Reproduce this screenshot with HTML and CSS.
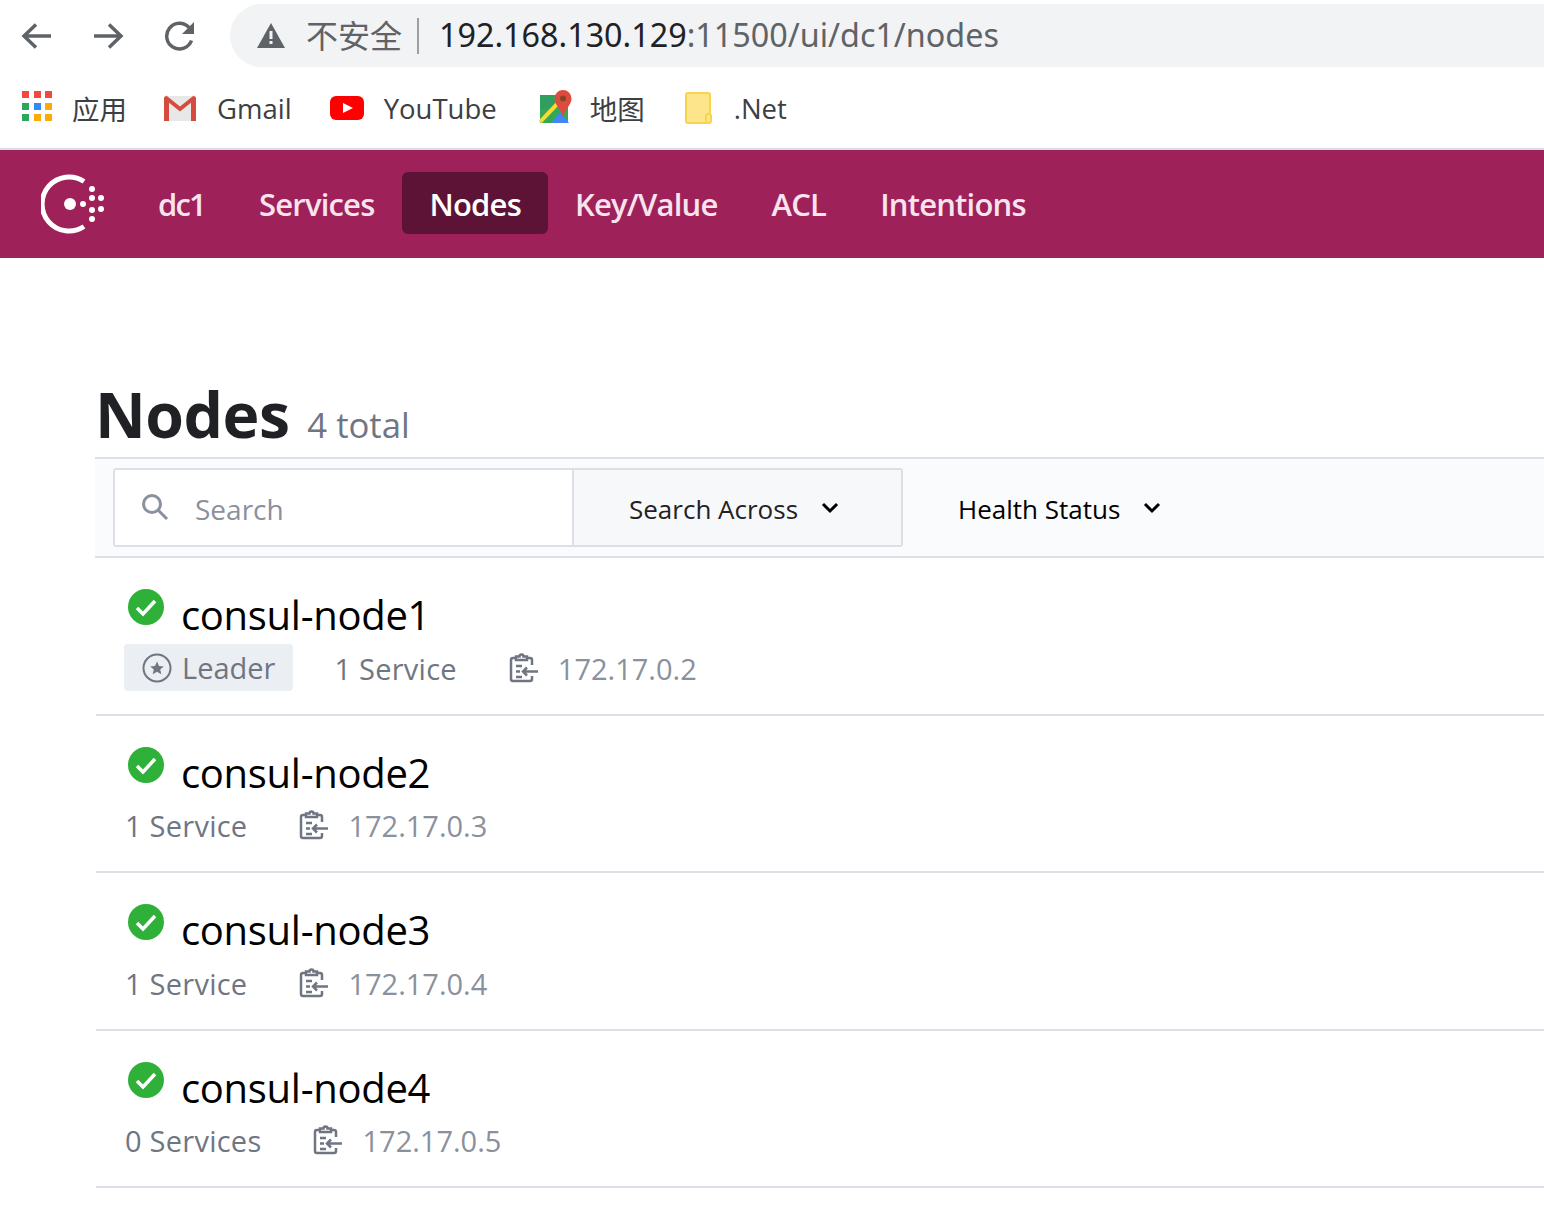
FILE: index.html
```html
<!DOCTYPE html>
<html lang="en">
<head>
    <meta charset="UTF-8">
    <meta name="viewport" content="width=device-width, initial-scale=1.0">
    <title>Nodes - Consul</title>
    <link rel="stylesheet" href="styles.css">
</head>
<body>

    <!-- Browser toolbar -->
    <div class="toolbar">
        <svg class="tool-icon" viewBox="0 0 32 32"><path d="M31 16H4M16 4.500L4 16l12 11.500" /></svg>
        <svg class="tool-icon" viewBox="0 0 32 32"><path d="M2 16h27M17 4.500L29 16 17 27.500" /></svg>
        <svg class="tool-icon" viewBox="0 0 32 32"><path d="M27.500 20.500A12.800 12.800 0 1 1 25 7.500" /><path class="fill" d="M30 2v12H18z" /></svg>
        <div class="address">
            <svg class="warn" viewBox="0 0 28 26"><path d="M14 0L28 25H0z" fill="#5f6368" /><rect x="12.5" y="8" width="3" height="8" fill="#f1f3f4" /><rect x="12.5" y="18" width="3" height="3" fill="#f1f3f4" /></svg>
            <span class="insecure">不安全</span>
            <span class="address-sep"></span>
            <span class="url"><span class="host">192.168.130.129</span><span class="path">:11500/ui/dc1/nodes</span></span>
        </div>
    </div>

    <!-- Bookmarks -->
    <div class="bookmarks">
        <a class="bookmark bm-apps">
            <span class="apps-grid">
                <i class="c-red"></i><i class="c-red"></i><i class="c-red"></i>
                <i class="c-green"></i><i class="c-blue"></i><i class="c-amber"></i>
                <i class="c-green"></i><i class="c-amber"></i><i class="c-amber"></i>
            </span>
            应用
        </a>
        <a class="bookmark bm-gmail">
            <svg class="bm-icon" viewBox="0 0 34 26"><path d="M1 1h32v25H1z" fill="#e8e8e8" /><path d="M2 2l15 12L32 2" fill="none" stroke="#d54c3f" stroke-width="4" /><path d="M1 2v24h5V6zM33 2v24h-5V6z" fill="#d54c3f" /></svg>
            Gmail
        </a>
        <a class="bookmark bm-youtube">
            <svg class="bm-icon" viewBox="0 0 34 24"><rect width="34" height="24" rx="6" fill="#f00" /><path d="M13 7l10 5-10 5z" fill="#fff" /></svg>
            YouTube
        </a>
        <a class="bookmark bm-maps">
            <svg class="bm-icon maps" viewBox="0 0 34 33"><path d="M1 5h28v28H1z" fill="#34a853" /><path d="M1 5h14v14H1z" fill="#2f9e5f" /><path d="M12 33l9-11 9 11z" fill="#4285f4" /><path d="M1 32L21 11" stroke="#fdd835" stroke-width="4" /><path d="M24 0a8.500 8.500 0 0 1 8.500 8.500C32.500 15 26 19 24 27 22 19 15.500 15 15.500 8.500A8.500 8.500 0 0 1 24 0z" fill="#dd4b3e" /><circle cx="24" cy="8.500" r="3" fill="#842" /></svg>
            地图
        </a>
        <a class="bookmark bm-net">
            <svg class="bm-icon folder" viewBox="0 0 28 32"><rect x="1" y="1" width="24" height="30" rx="2" fill="#fde58c" stroke="#f8d44c" stroke-width="2" /><rect x="21" y="22" width="5" height="9" rx="2" fill="#fde58c" stroke="#f8d44c" stroke-width="2" /></svg>
            .Net
        </a>
    </div>

    <!-- Consul header -->
    <header class="site-header">
        <svg class="logo" viewBox="0 0 64 60">
            <path d="M43 7.500A27 27 0 1 0 43 52.500" />
            <circle class="dot" cx="29" cy="30" r="6" />
            <circle class="dot" cx="42" cy="30" r="3" />
            <circle class="dot" cx="51" cy="15" r="3" />
            <circle class="dot" cx="51" cy="24" r="3" />
            <circle class="dot" cx="60" cy="24" r="3" />
            <circle class="dot" cx="51" cy="36" r="3" />
            <circle class="dot" cx="60" cy="35" r="3" />
            <circle class="dot" cx="51" cy="45" r="3" />
        </svg>
        <nav class="main-nav">
            <a class="nav-link">dc1</a>
            <a class="nav-link">Services</a>
            <a class="nav-link active">Nodes</a>
            <a class="nav-link">Key/Value</a>
            <a class="nav-link">ACL</a>
            <a class="nav-link">Intentions</a>
        </nav>
    </header>

    <main class="content">
        <h1 class="page-title">Nodes <em class="total">4 total</em></h1>

        <!-- Filter bar -->
        <div class="filter-bar">
            <div class="search-group">
                <div class="search-box">
                    <svg class="search-icon" viewBox="0 0 28 28"><circle cx="11" cy="11" r="8.500" /><path d="M17 17l9 9" /></svg>
                    <span class="search-text">Search</span>
                </div>
                <div class="search-across">
                    Search Across
                    <svg class="chevron" viewBox="0 0 18 12"><path d="M2 2l7 7 7-7" /></svg>
                </div>
            </div>
            <div class="health-status">
                Health Status
                <svg class="chevron" viewBox="0 0 18 12"><path d="M2 2l7 7 7-7" /></svg>
            </div>
        </div>

        <!-- Node list -->
        <ul class="node-list">
            <li class="node-row">
                <div class="node-head">
                    <svg class="health" viewBox="0 0 36 36"><circle cx="18" cy="18" r="18" /><path d="M9 19l6 6 12-13" /></svg>
                    <span class="node-name">consul-node1</span>
                </div>
                <div class="node-meta">
                    <span class="leader">
                        <svg class="star-icon" viewBox="0 0 30 30"><circle cx="15" cy="15" r="13.500" /><path d="M15 8.500l2 4.500 4.800.4-3.600 3.200 1.100 4.700-4.300-2.500-4.300 2.500 1.100-4.700-3.600-3.200 4.800-.4z" /></svg>
                        Leader
                    </span>
                    <span class="services">1 Service</span>
                    <span class="addr">
                        <svg class="clip-icon" viewBox="0 0 30 30"><path d="M18 5h3a2 2 0 0 1 2 2v5M23 23v3a2 2 0 0 1-2 2H4a2 2 0 0 1-2-2V7a2 2 0 0 1 2-2h3M7 7V3.500h3.500a2 2 0 0 1 4 0H18V7zM7 13h6M7 18.500h4M7 24h6M29 18.500H14M18 14.500l-4 4 4 4" /></svg>
                        172.17.0.2
                    </span>
                </div>
            </li>
            <li class="node-row">
                <div class="node-head">
                    <svg class="health" viewBox="0 0 36 36"><circle cx="18" cy="18" r="18" /><path d="M9 19l6 6 12-13" /></svg>
                    <span class="node-name">consul-node2</span>
                </div>
                <div class="node-meta">
                    <span class="services">1 Service</span>
                    <span class="addr">
                        <svg class="clip-icon" viewBox="0 0 30 30"><path d="M18 5h3a2 2 0 0 1 2 2v5M23 23v3a2 2 0 0 1-2 2H4a2 2 0 0 1-2-2V7a2 2 0 0 1 2-2h3M7 7V3.500h3.500a2 2 0 0 1 4 0H18V7zM7 13h6M7 18.500h4M7 24h6M29 18.500H14M18 14.500l-4 4 4 4" /></svg>
                        172.17.0.3
                    </span>
                </div>
            </li>
            <li class="node-row">
                <div class="node-head">
                    <svg class="health" viewBox="0 0 36 36"><circle cx="18" cy="18" r="18" /><path d="M9 19l6 6 12-13" /></svg>
                    <span class="node-name">consul-node3</span>
                </div>
                <div class="node-meta">
                    <span class="services">1 Service</span>
                    <span class="addr">
                        <svg class="clip-icon" viewBox="0 0 30 30"><path d="M18 5h3a2 2 0 0 1 2 2v5M23 23v3a2 2 0 0 1-2 2H4a2 2 0 0 1-2-2V7a2 2 0 0 1 2-2h3M7 7V3.500h3.500a2 2 0 0 1 4 0H18V7zM7 13h6M7 18.500h4M7 24h6M29 18.500H14M18 14.500l-4 4 4 4" /></svg>
                        172.17.0.4
                    </span>
                </div>
            </li>
            <li class="node-row">
                <div class="node-head">
                    <svg class="health" viewBox="0 0 36 36"><circle cx="18" cy="18" r="18" /><path d="M9 19l6 6 12-13" /></svg>
                    <span class="node-name">consul-node4</span>
                </div>
                <div class="node-meta">
                    <span class="services">0 Services</span>
                    <span class="addr">
                        <svg class="clip-icon" viewBox="0 0 30 30"><path d="M18 5h3a2 2 0 0 1 2 2v5M23 23v3a2 2 0 0 1-2 2H4a2 2 0 0 1-2-2V7a2 2 0 0 1 2-2h3M7 7V3.500h3.500a2 2 0 0 1 4 0H18V7zM7 13h6M7 18.500h4M7 24h6M29 18.500H14M18 14.500l-4 4 4 4" /></svg>
                        172.17.0.5
                    </span>
                </div>
            </li>
        </ul>
    </main>

</body>
</html>
```

FILE: styles.css
```css
/* General */
body {
    margin: 0;
    height: 1211px;
    overflow: hidden;
    background: #fff;
    font-family: "Open Sans", "Noto Sans CJK SC", sans-serif;
    color: #000;
}

a {
    text-decoration: none;
}

/* Browser toolbar */
.toolbar {
    display: flex;
    align-items: center;
    height: 63px;
    padding: 4px 0 3px 20px;
}

.tool-icon {
    width: 32px;
    height: 32px;
    margin-right: 40px;
    flex: none;
    fill: none;
    stroke: #5f6368;
    stroke-width: 3.5;
}

.tool-icon .fill {
    fill: #5f6368;
    stroke: none;
}

.tool-icon:nth-child(3) {
    margin-right: 34px;
}

.address {
    flex: 1;
    display: flex;
    align-items: center;
    height: 63px;
    padding-left: 27px;
    background: #f1f3f4;
    border-radius: 32px 0 0 32px;
    font-family: "Noto Sans", "Noto Sans CJK SC", sans-serif;
    font-size: 32.3px;
    white-space: nowrap;
}

.warn {
    width: 28px;
    height: 26px;
    margin-right: 21px;
}

.insecure {
    margin-bottom: 4px;
    color: #5f6368;
    font-size: 32px;
    font-family: "Noto Sans CJK SC", sans-serif;
}

.address-sep {
    width: 2px;
    height: 36px;
    margin: 0 20px 0 15px;
    background: #9aa0a6;
}

.url {
    margin-bottom: 4px;
}

.host {
    color: #202124;
}

.path {
    color: #5f6368;
}

/* Bookmarks */
.bookmarks {
    display: flex;
    align-items: center;
    height: 76px;
    padding: 0 0 2px 22px;
    border-bottom: 2px solid #dadce0;
    font-size: 27.5px;
    color: #3c4043;
}

.bookmark {
    display: flex;
    align-items: center;
    color: #3c4043;
}

.bm-apps { margin-right: 36px; }
.bm-gmail { margin-right: 38px; }
.bm-youtube { margin-right: 42px; }
.bm-maps { margin-right: 40px; }

.apps-grid {
    display: grid;
    grid-template-columns: repeat(3, 7px);
    gap: 4.5px;
    margin: 0 20px 4px 0;
}

.apps-grid i {
    height: 7px;
}

.c-red { background: #f44741; }
.c-green { background: #2ea45f; }
.c-blue { background: #2e8cf4; }
.c-amber { background: #fbab05; }

.bm-icon {
    width: 34px;
    height: 26px;
    margin-right: 20px;
}

.bm-icon.maps {
    height: 33px;
    margin-bottom: 3px;
    margin-right: 17px;
}

.bm-icon.folder {
    width: 28px;
    height: 32px;
    margin-right: 21px;
}

/* Consul header */
.site-header {
    display: flex;
    align-items: center;
    height: 108px;
    padding-left: 41px;
    background: #9e2159;
}

.logo {
    width: 64px;
    height: 60px;
    margin-right: 26px;
    flex: none;
    fill: none;
    stroke: #fff;
    stroke-width: 5;
}

.logo .dot {
    fill: #fff;
    stroke: none;
}

.main-nav {
    display: flex;
    align-items: center;
    margin-bottom: 2px;
}

.nav-link {
    display: block;
    padding: 2px 27px 0;
    line-height: 60px;
    border-radius: 6px;
    font-size: 31px;
    font-weight: 600;
    letter-spacing: -0.8px;
    color: #f7e4ee;
}

.nav-link:first-child {
    letter-spacing: -1.8px;
}

.nav-link:nth-child(2) {
    padding-right: 28px;
}

.nav-link.active {
    background: #5c1335;
    color: #fff;
}

/* Page content */
.content {
    padding: 0 0 0 95px;
}

.page-title {
    margin: 114px 0 0;
    height: 85px;
    line-height: 84px;
    font-size: 62.5px;
    font-weight: 700;
    color: #1f2124;
    letter-spacing: -0.5px;
}

.total {
    margin-left: 2px;
    font-size: 34.7px;
    font-style: normal;
    font-weight: 400;
    color: #6f7682;
    letter-spacing: 0;
}

/* Filter bar */
.filter-bar {
    display: flex;
    align-items: center;
    height: 97px;
    padding-left: 18px;
    background: #fafbfc;
    border-top: 2px solid #dcdfe6;
    border-bottom: 2px solid #dcdfe6;
}

.search-group {
    display: flex;
    width: 790px;
    height: 79px;
    box-sizing: border-box;
    border: 2px solid #dcdfe6;
    border-radius: 3px;
}

.search-box {
    display: flex;
    align-items: center;
    width: 459px;
    padding: 2px 0 0 26px;
    box-sizing: border-box;
    background: #fff;
    border-right: 2px solid #dcdfe6;
}

.search-icon {
    width: 28px;
    height: 28px;
    margin: -3px 26px 0 0;
    fill: none;
    stroke: #8a909c;
    stroke-width: 3;
}

.search-text {
    font-size: 28px;
    color: #8a909c;
}

.search-across {
    flex: 1;
    display: flex;
    align-items: center;
    padding: 2px 0 0 55px;
    background: #f7f8fa;
    font-size: 26px;
    font-weight: 500;
    color: #1f2124;
}

.chevron {
    width: 18px;
    height: 12px;
    margin-left: 23px;
    margin-top: -2px;
    fill: none;
    stroke: #000;
    stroke-width: 3;
}

.health-status {
    display: flex;
    align-items: center;
    margin-left: 55px;
    padding-top: 2px;
    font-size: 26px;
    font-weight: 500;
    color: #000;
}

/* Node list */
.node-list {
    margin: 0;
    padding: 0;
    list-style: none;
}

.node-row {
    height: 155.5px;
    margin-left: 1px;
    padding-left: 29px;
    border-bottom: 2px solid #dcdfe6;
}

.node-head {
    display: flex;
    height: 85px;
    padding-left: 3px;
}

.health {
    width: 36px;
    height: 36px;
    margin-top: 31px;
    flex: none;
    fill: #2eb039;
}

.health path {
    fill: none;
    stroke: #fff;
    stroke-width: 3.5;
}

.node-name {
    margin: 30px 0 0 17px;
    line-height: 54px;
    font-size: 40px;
    font-weight: 500;
    color: #000;
    letter-spacing: -0.3px;
}

.node-meta {
    display: flex;
    align-items: center;
    height: 48px;
    font-size: 29px;
    color: #6f7682;
}

.leader {
    display: flex;
    align-items: center;
    height: 47px;
    box-sizing: border-box;
    padding: 1px 18px 0;
    margin: 0 41px 0 -1px;
    background: #ebeef2;
    border-radius: 4px;
}

.star-icon {
    width: 30px;
    height: 30px;
    margin-right: 10px;
    fill: none;
    stroke: #6f7682;
    stroke-width: 2;
}

.star-icon path {
    fill: #6f7682;
    stroke: none;
}

.services {
    padding-top: 2px;
    margin-right: 52px;
    letter-spacing: 0.25px;
}

.addr {
    display: flex;
    align-items: center;
    padding-top: 2px;
    color: #8a909c;
}

.clip-icon {
    width: 30px;
    height: 30px;
    margin: -1px 19px 0 0;
    fill: none;
    stroke: #6f7682;
    stroke-width: 2.5;
}
```
